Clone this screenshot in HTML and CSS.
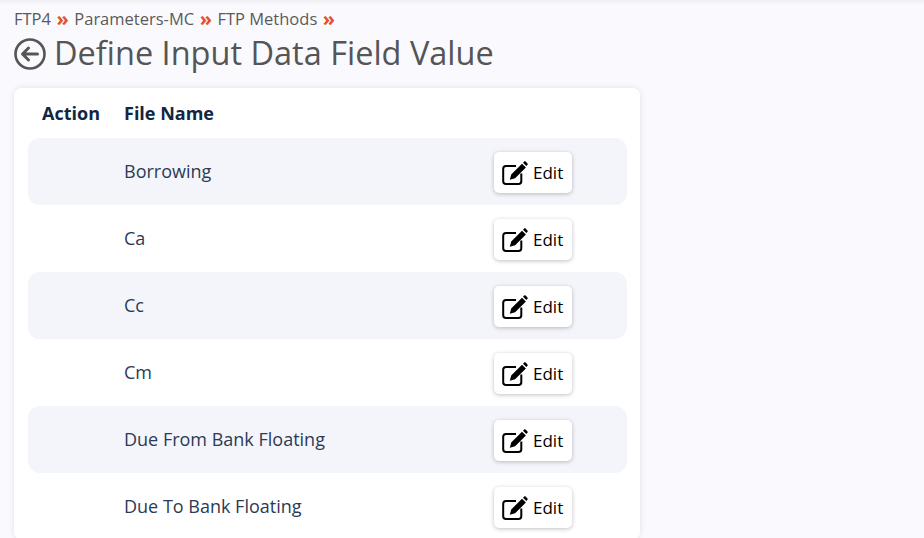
FILE: index.html
```html
<!DOCTYPE html>
<html lang="en">
<head>
  <meta charset="UTF-8">
  <meta name="viewport" content="width=device-width,initial-scale=1">
  <title>Define Input Data Field Value</title>
  <link rel="stylesheet" href="styles.css">
</head>
<body>
<div class="topbar"></div>
<div class="crumbs">
  <span>FTP4</span><b>»</b>
  <span>Parameters-MC</span><b>»</b>
  <span>FTP Methods</span><b>»</b>
</div>
<div class="title">
  <svg class="back" viewBox="0 0 32 32" width="32" height="32" aria-hidden="true">
    <circle cx="16" cy="16" r="14.500" fill="none" stroke="currentColor" stroke-width="2.600"/>
    <path d="M14.500 10 8.500 16l6 6M9 16H23.500" fill="none" stroke="currentColor" stroke-width="3" stroke-linecap="round" stroke-linejoin="round"/>
  </svg>
  <h1>Define Input Data Field Value</h1>
</div>

<div class="card">
  <div class="row head">
    <div class="c-action">Action</div>
    <div class="c-name">File Name</div>
  </div>
  <div class="row">
    <div class="c-action"></div>
    <div class="c-name">Borrowing</div>
    <button class="edit"><svg viewBox="0 0 26 24" width="26" height="24"><use href="#pen"/></svg>Edit</button>
  </div>
  <div class="row">
    <div class="c-action"></div>
    <div class="c-name">Ca</div>
    <button class="edit"><svg viewBox="0 0 26 24" width="26" height="24"><use href="#pen"/></svg>Edit</button>
  </div>
  <div class="row">
    <div class="c-action"></div>
    <div class="c-name">Cc</div>
    <button class="edit"><svg viewBox="0 0 26 24" width="26" height="24"><use href="#pen"/></svg>Edit</button>
  </div>
  <div class="row">
    <div class="c-action"></div>
    <div class="c-name">Cm</div>
    <button class="edit"><svg viewBox="0 0 26 24" width="26" height="24"><use href="#pen"/></svg>Edit</button>
  </div>
  <div class="row">
    <div class="c-action"></div>
    <div class="c-name">Due From Bank Floating</div>
    <button class="edit"><svg viewBox="0 0 26 24" width="26" height="24"><use href="#pen"/></svg>Edit</button>
  </div>
  <div class="row">
    <div class="c-action"></div>
    <div class="c-name">Due To Bank Floating</div>
    <button class="edit"><svg viewBox="0 0 26 24" width="26" height="24"><use href="#pen"/></svg>Edit</button>
  </div>
</div>

<svg class="defs" width="0" height="0" aria-hidden="true">
  <symbol id="pen" viewBox="0 0 26 24">
    <path d="M14 5H4A2.800 2.800 0 0 0 1.200 7.800V20.200A2.800 2.800 0 0 0 4 23H16.500A2.800 2.800 0 0 0 19.300 20.200V12.500" fill="none" stroke="currentColor" stroke-width="2"/>
    <path d="M7.800 18.700l1.400-5.200L20 2.700l3.900 3.900L13.100 17.300zM21 1.700l1-1c.5-.5 1.300-.5 1.800 0l1.500 1.500c.5.5.5 1.300 0 1.800l-1 1z" fill="currentColor"/>
  </symbol>
</svg>
</body>
</html>
```

FILE: styles.css
```css
* { box-sizing: border-box; margin: 0; padding: 0 }
html, body { height: 100%; overflow: hidden }
body {
  font-family: "Open Sans", sans-serif;
  background: #fafafe;
  color: #2b3a55;
  padding: 0 14px;
}
.topbar {
  height: 0;
  margin: 0 -14px;
  box-shadow: 0 0 4px 1px rgba(0, 0, 0, .12);
}
.crumbs {
  display: flex;
  align-items: center;
  gap: 5.500px;
  padding-top: 8px;
  height: 30px;
  font-size: 16.500px;
  line-height: 20px;
  color: #5a5a5a;
}
.crumbs b {
  color: #e2512c;
  font-size: 20px;
  font-weight: 700;
  line-height: 18px;
}
.title {
  display: flex;
  align-items: center;
  gap: 8px;
  height: 48px;
  color: #555;
}
.back { flex: none }
.title h1 {
  font-size: 32.500px;
  font-weight: 400;
  line-height: 44px;
  padding-bottom: 2px;
}
.card {
  width: 626px;
  margin-top: 10px;
  padding: 0 13px 0 14px;
  background: #fff;
  border-radius: 8px;
  box-shadow: 0 0 6px rgba(0, 0, 0, .1);
}
.row {
  display: flex;
  align-items: center;
  height: 67px;
  border-radius: 12px;
  font-size: 18px;
}
.row:nth-child(even) { background: #f4f5fb }
.row.head {
  height: 50px;
  font-weight: 700;
  color: #12263f;
}
.c-action {
  width: 96px;
  flex: none;
  padding-left: 14px;
}
.c-name { width: 370px; flex: none; padding-bottom: 2px }
.head .c-name { padding-bottom: 0 }
.edit {
  display: flex;
  align-items: center;
  gap: 5px;
  width: 78px;
  height: 41px;
  margin-top: 2px;
  padding-left: 8px;
  border: 0;
  border-radius: 5px;
  background: #fff;
  color: #000;
  font: 400 17px "Open Sans", sans-serif;
  box-shadow: 0 1px 4px rgba(0, 0, 0, .25);
}
.defs { position: absolute }
```
